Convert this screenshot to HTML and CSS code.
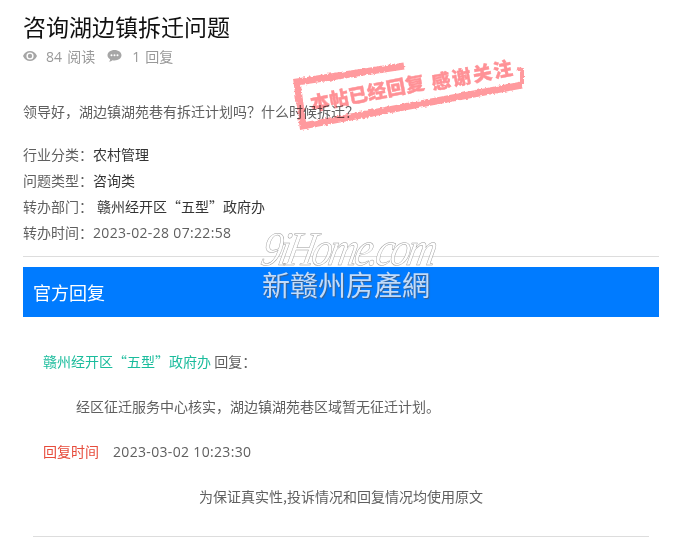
FILE: index.html
```html
<!DOCTYPE html>
<html lang="zh">
<head>
<meta charset="utf-8">
<title>咨询湖边镇拆迁问题</title>
<link rel="stylesheet" href="styles.css">
</head>
<body>
<main class="page">
  <h1 class="title">咨询湖边镇拆迁问题</h1>
  <div class="stats">
    <svg class="ico" width="14" height="10" viewBox="0 0 14 10"><path fill="#a6a6a6" d="M7 0C4 0 1.500 1.800 0 5c1.500 3.200 4 5 7 5s5.500-1.800 7-5C12.500 1.800 10 0 7 0zm0 8.600A3.600 3.600 0 1 1 7 1.400a3.600 3.600 0 0 1 0 7.200z"/><circle fill="#a6a6a6" cx="7" cy="5" r="2.200"/></svg>
    <span class="stat"><span class="num">84</span> 阅读</span>
    <svg class="ico ico-c" width="15" height="12" viewBox="0 0 14 12"><path fill="#a6a6a6" d="M7 0c3.900 0 7 2.300 7 5.200s-3.100 5.200-7 5.200c-.7 0-1.300-.1-1.900-.2C4.100 11 2.900 11.600 1.600 11.800c.6-.7 1-1.500 1.100-2.500C1 8.400 0 6.900 0 5.200 0 2.300 3.100 0 7 0z"/><circle fill="#fff" cx="4" cy="5.200" r="1"/><circle fill="#fff" cx="7" cy="5.200" r="1"/><circle fill="#fff" cx="10" cy="5.200" r="1"/></svg>
    <span class="stat"><span class="num">1</span> 回复</span>
  </div>
  <p class="question">领导好，湖边镇湖苑巷有拆迁计划吗？什么时候拆迁？</p>
  <ul class="meta">
    <li><span class="label">行业分类：</span><span class="dark">农村管理</span></li>
    <li><span class="label">问题类型：</span><span class="dark">咨询类</span></li>
    <li><span class="label">转办部门：</span><span class="dark dept">赣州经开区“五型”政府办</span></li>
    <li><span class="label">转办时间：</span><span class="num date">2023-02-28 07:22:58</span></li>
  </ul>
  <hr class="rule">
  <h2 class="banner">官方回复</h2>
  <section class="reply">
    <p class="from"><span class="teal">赣州经开区“五型”政府办</span> 回复：</p>
    <p class="answer">经区征迁服务中心核实，湖边镇湖苑巷区域暂无征迁计划。</p>
    <p class="time"><span class="red">回复时间</span><span class="num date stamp-time">2023-03-02 10:23:30</span></p>
    <p class="note">为保证真实性,投诉情况和回复情况均使用原文</p>
    <hr class="rule rule-end">
  </section>
</main>
<svg class="stamp" width="260" height="100" viewBox="280 45 260 100">
  <defs>
    <filter id="rough" x="-5%" y="-15%" width="110%" height="130%">
      <feTurbulence type="fractalNoise" baseFrequency="0.35" numOctaves="2" seed="4"/>
      <feDisplacementMap in="SourceGraphic" scale="3.500" xChannelSelector="R" yChannelSelector="G"/>
    </filter>
    <filter id="roughText" x="-5%" y="-15%" width="110%" height="130%">
      <feTurbulence type="fractalNoise" baseFrequency="0.5" numOctaves="1" seed="7"/>
      <feDisplacementMap in="SourceGraphic" scale="1.200" xChannelSelector="R" yChannelSelector="G"/>
    </filter>
  </defs>
  <g filter="url(#rough)">
    <path class="stamp-line" d="M404 66 297 82 303 126 522 85"/>
    <path class="stamp-line stamp-short" d="M517 69 522 70 522 84"/>
  </g>
  <g filter="url(#roughText)">
    <text class="stamp-text" transform="translate(312 111) rotate(-11)">本帖已经回复</text>
    <text class="stamp-text stamp-text-b" transform="translate(433 90) rotate(-11)">感谢关注</text>
  </g>
</svg>
<div class="wm">
  <div class="wm-en">9iHome.com</div>
  <div class="wm-cn">新赣州房產網</div>
</div>
</body>
</html>
```
FILE: styles.css
```css
* { box-sizing: border-box; }
html, body { margin: 0; padding: 0; background: #fff; overflow: hidden; }
body {
  height: 539px;
  font: 14px/26px "Noto Sans CJK SC", "Open Sans", sans-serif;
  color: #5f5f5f;
  position: relative;
}
.page { padding: 9px 23px 0 23px; }
.title { margin: 0; font-size: 23px; line-height: 34px; font-weight: 400; color: #111; }
.stats { display: flex; align-items: center; height: 26px; color: #999; }
.stat { word-spacing: 2px; }
.num { font-family: "Open Sans", sans-serif; }
.date { letter-spacing: .33px; }
.ico { margin-right: 9px; }
.ico-c { margin-left: 12px; margin-right: 10px; }
.question { margin: 29px 0 0; }
.meta { list-style: none; margin: 17px 0 0; padding: 0; }
.meta li { height: 26px; }
.dark { color: #333; }
.dept { margin-left: 4px; }
.rule { margin: 0; border: 0; border-top: 1px solid #ddd; }
.meta + .rule { margin-top: 11px; }
.banner {
  margin: 10px 0 0; height: 50px; padding-left: 10px;
  background: #007bff; color: #fff; font-size: 18px; font-weight: 400; line-height: 50px;
}
.reply { padding: 0 10px; }
.from { margin: 31px 0 0; padding-left: 10px; }
.teal { color: #1abc9c; }
.answer { margin: 19px 0 0; padding-left: 43px; }
.time { margin: 19px 0 0; padding-left: 10px; }
.red { color: #e74c3c; }
.stamp-time { margin-left: 14px; }
.note { margin: 18px 0 0; text-align: center; }
.rule-end { margin-top: 27px; }
.stamp { position: absolute; left: 280px; top: 45px; mix-blend-mode: multiply; pointer-events: none; }
.stamp-line { fill: none; stroke: #ff9a9e; stroke-width: 7px; }
.stamp-short { stroke-width: 4px; }
.stamp-text { fill: #ff9196; stroke: #ff9196; stroke-width: .4px; font-size: 19px; font-weight: 900; letter-spacing: .3px; }
.stamp-text-b { letter-spacing: 2px; }
.wm { position: absolute; left: 262px; top: 231px; width: 180px; pointer-events: none; }
.wm-en {
  height: 36px; margin-left: -3px; font: italic 400 48px/36px "Liberation Serif", serif; color: rgba(255,255,255,.85);
  -webkit-text-stroke: .5px #999; letter-spacing: -4px; white-space: nowrap;
  transform: scaleX(.84) skewX(-14deg); transform-origin: left bottom;
}
.wm-cn {
  font-size: 28px; line-height: 34px; color: #c2dcfa; white-space: nowrap;
  text-shadow: 1px 1px 1px #3f5f88;
}
```
